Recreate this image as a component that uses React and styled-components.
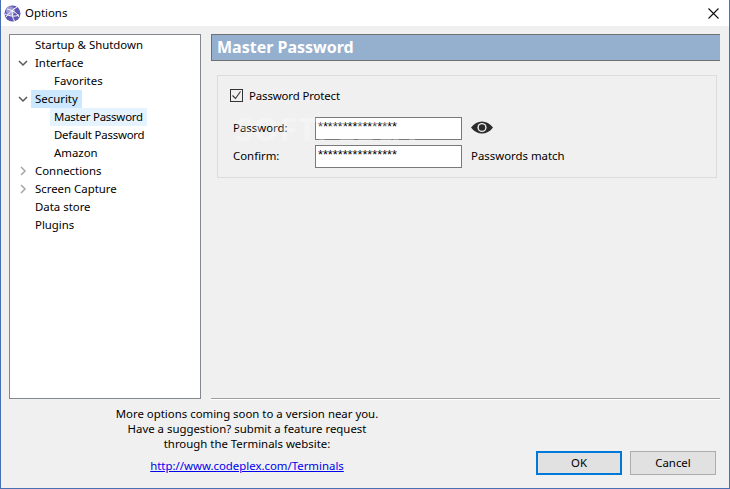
import React from "react";
import styled, { createGlobalStyle } from "styled-components";

const Global = createGlobalStyle`
  html, body { margin: 0; padding: 0; background: #f0f0f0; }
  * { box-sizing: border-box; }
`;

const Win = styled.div`
  width: 730px; height: 489px; display: flex; flex-direction: column;
  background: #f0f0f0; border: 1px solid #4a70b4; border-top: 0;
  font-family: "Noto Sans", sans-serif; font-size: 11.4px; color: #000; overflow: hidden; position: relative;
`;
const TitleBar = styled.div`
  height: 26px; flex: none; background: #fff; display: flex; align-items: center;
  padding: 0 10px 0 3px; gap: 4px;
`;
const Title = styled.span` flex: 1; line-height: 26px; `;
const Body = styled.div`
  display: flex; height: 373px; flex: none; padding: 8px 0 0 8px; gap: 10px;
`;
const Tree = styled.div`
  width: 192px; height: 365px; background: #fff; border: 1px solid #828790; padding: 1px 0 0 0;
`;
const Row = styled.div`
  height: 18px; display: flex; align-items: center; position: relative; padding-left: ${p => p.$level ? 44 : 25}px;
`;
const Label = styled.span`
  display: inline-block; height: 18px; line-height: 17px; padding: 0 4px;
  margin-left: -4px;
  letter-spacing: ${p => p.$tight ? "-0.2px" : "0"};
  background: ${p => p.$sel === "active" ? "#cce8ff" : p.$sel === "hover" ? "#e5f3ff" : "transparent"};
`;
const Arrow = styled.svg`
  position: absolute; left: 8px; top: 4px; width: 10px; height: 10px;
`;
const Panel = styled.div`
  width: 509px; height: 365px; display: flex; flex-direction: column; border-bottom: 1px solid #a0a0a0; box-shadow: 0 1px 0 #fff;
`;
const Header = styled.div`
  height: 27px; flex: none; background: #95b0cf; border: 1px solid #707070; border-right: 0; padding-left: 5px;
  font-size: 16px; font-weight: 700; color: #fff; line-height: 24px;
`;
const Group = styled.div`
  margin: 14px 3px 0 6px; height: 103px; border: 1px solid #dcdcdc; padding: 12px 0 0 12px;
`;
const CheckRow = styled.label`
  display: flex; align-items: center; gap: 6px; height: 14px; letter-spacing: -0.12px;
`;
const Box = styled.span`
  width: 13px; height: 13px; border: 1px solid #333; background: #f0f0f0; display: flex; flex: none;
`;
const Field = styled.div`
  display: flex; align-items: center; height: 24px; padding-left: 3px; margin-top: ${p => p.$first ? 14 : 4}px;
`;
const FieldLabel = styled.span` width: 82px; flex: none; padding-bottom: 2px; `;
const Input = styled.div`
  width: 147px; height: 23px; flex: none; background: #fff; border: 1px solid #7a7a7a; padding: 0 2px;
  font-family: "Liberation Sans", sans-serif; font-size: 12.7px; line-height: 19px; overflow: hidden;
`;
const Side = styled.span` margin-left: 9px; display: flex; align-items: center; padding-bottom: 2px; `;
const Footer = styled.div`
  display: flex; flex: 1; padding: 0 13px 0 0;
`;
const Help = styled.div`
  width: 492px; text-align: center; padding-top: 7px; line-height: 15px;
`;
const HelpLink = styled.a`
  display: block; margin-top: 7px; color: #0000ee; text-decoration: underline;
`;
const Buttons = styled.div`
  display: flex; gap: 8px; padding: 52px 0 0 43px;
`;
const Btn = styled.button`
  width: 86px; height: 24px; padding: 0 0 2px; font: inherit; color: #000; background: #e1e1e1;
  border: ${p => p.$primary ? "2px solid #0078d7" : "1px solid #adadad"};
`;
const Watermark = styled.div`
  position: absolute; left: 234px; top: 111px; font-size: 33px; font-weight: 700; letter-spacing: 0;
  color: rgba(255,255,255,0.3); pointer-events: none; line-height: 36px; white-space: nowrap;
`;

const Down = () => (
  <Arrow viewBox="0 0 10 10"><path d="M1 3l4 4 4-4" fill="none" stroke="#595959" strokeWidth="1.5" /></Arrow>
);
const Right = () => (
  <Arrow viewBox="0 0 10 10"><path d="M3 1l4 4-4 4" fill="none" stroke="#a6a6a6" strokeWidth="1.5" /></Arrow>
);

const Globe = () => (
  <svg width="17" height="17" viewBox="0 0 17 17" style={{ flex: "none" }}>
    <circle cx="8.5" cy="8.5" r="8" fill="#5f58b4" />
    <circle cx="6.5" cy="6" r="4.5" fill="#b3aee0" opacity="0.75" />
    <path d="M2 12C5 8 9 4 13 2M3 4c3 1 9 2 12 8M8.5 5c-1 3 0 8 2 11M1 9c4 2 10 3 14 1" fill="none" stroke="#fff" strokeWidth="1" />
  </svg>
);

const Close = () => (
  <svg width="11" height="11" viewBox="0 0 11 11"><path d="M.5.5l10 10M10.5.5l-10 10" stroke="#111" strokeWidth="1.1" /></svg>
);

const Eye = () => (
  <svg width="22" height="13" viewBox="0 0 22 13">
    <path d="M0 6.5C3 2.5 7 .5 11 .5s8 2 11 6c-3 4-7 6-11 6s-8-2-11-6z" fill="#2b2b2b" />
    <circle cx="11" cy="6.5" r="4.6" fill="#f0f0f0" />
    <circle cx="11" cy="6.5" r="3.2" fill="#2b2b2b" />
  </svg>
);

const items = [
  { t: "Startup & Shutdown" },
  { t: "Interface", a: "down" },
  { t: "Favorites", level: 1 },
  { t: "Security", a: "down", sel: "active" },
  { t: "Master Password", level: 1, sel: "hover", tight: true },
  { t: "Default Password", level: 1, tight: true },
  { t: "Amazon", level: 1 },
  { t: "Connections", a: "right" },
  { t: "Screen Capture", a: "right" },
  { t: "Data store" },
  { t: "Plugins" },
];

export default function App() {
  return (
    <Win>
      <Global />
      <TitleBar>
        <Globe />
        <Title>Options</Title>
        <Close />
      </TitleBar>
      <Body>
        <Tree>
          {items.map(i => (
            <Row key={i.t} $level={i.level}>
              {i.a === "down" && <Down />}
              {i.a === "right" && <Right />}
              <Label $sel={i.sel} $tight={i.tight}>{i.t}</Label>
            </Row>
          ))}
        </Tree>
        <Panel>
          <Header>Master Password</Header>
          <Group>
            <CheckRow>
              <Box>
                <svg width="11" height="11" viewBox="0 0 11 11"><path d="M1.5 5.5l3 3 5-7" fill="none" stroke="#333" strokeWidth="1.1" /></svg>
              </Box>
              Password Protect
            </CheckRow>
            <Field $first>
              <FieldLabel>Password:</FieldLabel>
              <Input>****************</Input>
              <Side><Eye /></Side>
            </Field>
            <Field>
              <FieldLabel>Confirm:</FieldLabel>
              <Input>****************</Input>
              <Side>Passwords match</Side>
            </Field>
          </Group>
        </Panel>
      </Body>
      <Footer>
        <Help>
          More options coming soon to a version near you.<br />
          Have a suggestion? submit a feature request<br />
          through the Terminals website:
          <HelpLink href="#">http://www.codeplex.com/Terminals</HelpLink>
        </Help>
        <Buttons>
          <Btn $primary>OK</Btn>
          <Btn>Cancel</Btn>
        </Buttons>
      </Footer>
      <Watermark>SOFTPEDIA</Watermark>
    </Win>
  );
}
